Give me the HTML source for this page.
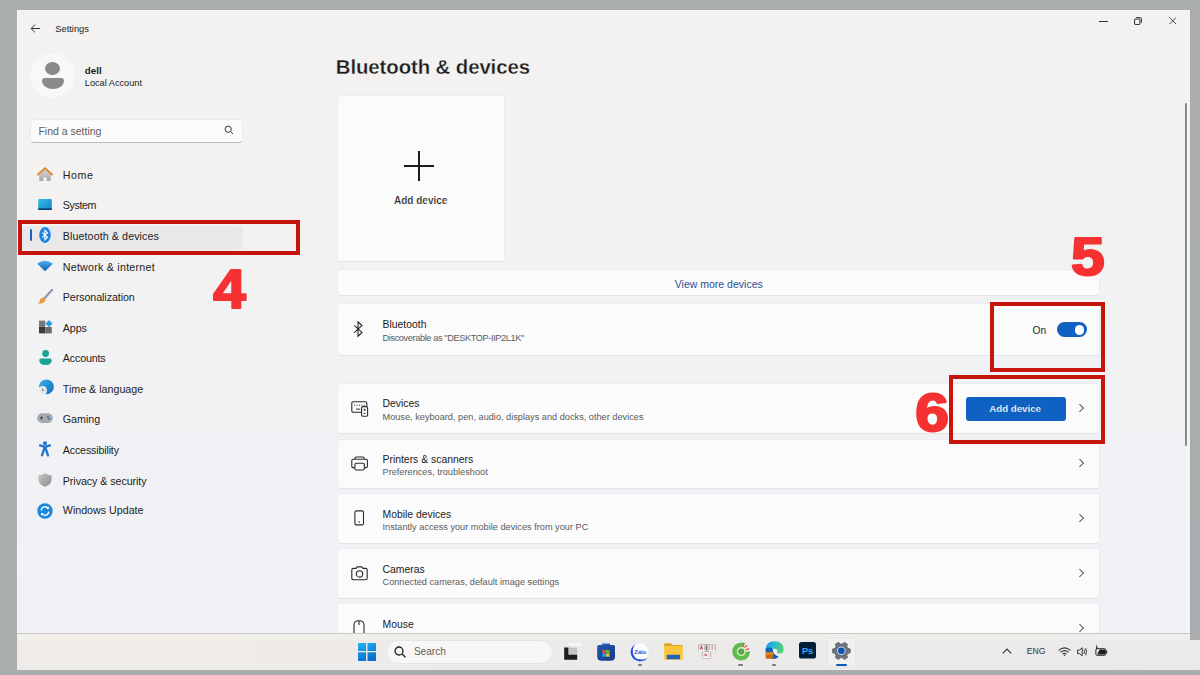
<!DOCTYPE html>
<html><head><meta charset="utf-8">
<style>
*{margin:0;padding:0;box-sizing:border-box}
html,body{width:1200px;height:675px;overflow:hidden;background:#aaadae;font-family:"Liberation Sans",sans-serif;color:#1b1b1b}
.a{position:absolute}
#win{position:absolute;left:17px;top:10px;width:1173px;height:630px;box-shadow:inset 1px 1px 0 rgba(255,255,255,.45);background:linear-gradient(180deg,#f4f2f0 0%,#f3f2f1 33%,#f2f2f4 52%,#f0f1f6 100%);overflow:hidden}
.t{position:absolute;white-space:nowrap;line-height:1}
.nav{font-size:10.7px;color:#1c1c1c}
.card{position:absolute;left:320px;width:763px;background:#fbfbfb;border-radius:4px;border:1px solid #ececee;border-bottom-color:#e3e3e5}
.ttl{font-size:10.4px;color:#1c1c1c}
.dsc{font-size:9.2px;color:#5c5c5c}
.chev{position:absolute;width:5.6px;height:5.6px;border-right:1px solid #5a5a5a;border-top:1px solid #5a5a5a;transform:rotate(45deg)}
.red{position:absolute;border:4.5px solid #c5150c}
.num{position:absolute;font-family:"Liberation Sans",sans-serif;font-weight:bold;color:#ee3130;line-height:1}
#tb{position:absolute;left:17px;top:633px;width:1183px;height:37px;background:linear-gradient(90deg,#efebe8 0%,#edebe9 35%,#ebeaea 100%);border-top:1px solid #c8c8c8}
</style></head><body>
<div id="win">
  <!-- title bar -->
  <svg class="a" style="left:13px;top:14px" width="11" height="10" viewBox="0 0 11 10"><path d="M10 4.5H1.4M5 0.6L1.1 4.5 5 8.4" fill="none" stroke="#333" stroke-width="1"/></svg>
  <div class="t" style="left:38.3px;top:14.8px;font-size:9.3px;color:#222">Settings</div>
  <div class="a" style="left:1082px;top:11px;width:8.5px;height:1px;background:#333"></div>
  <svg class="a" style="left:1117px;top:7.2px" width="8" height="8" viewBox="0 0 8 8"><rect x="0.55" y="2.05" width="5.4" height="5.4" rx="1.1" fill="none" stroke="#333" stroke-width="1.05"/><path d="M2.3 0.55h3.6a1.6 1.6 0 0 1 1.6 1.6v3.6" fill="none" stroke="#333" stroke-width="1"/></svg>
  <svg class="a" style="left:1151.6px;top:7.4px" width="7.6" height="7.6" viewBox="0 0 8 8"><path d="M0.3 0.3L7.7 7.7M7.7 0.3L0.3 7.7" stroke="#333" stroke-width="0.9"/></svg>

  <!-- profile -->
  <div class="a" style="left:13px;top:43px;width:45px;height:45px;border-radius:50%;background:#f8f8f8"></div>
  <div class="a" style="left:28.3px;top:52px;width:14.7px;height:13px;border-radius:50%;background:#8a8a8a"></div>
  <div class="a" style="left:24.7px;top:67.5px;width:22px;height:11px;border-radius:3px 3px 11px 11px/3px 3px 8px 8px;background:#8a8a8a"></div>
  <div class="t" style="left:67.8px;top:56px;font-size:9.8px;font-weight:bold;color:#1b1b1b">dell</div>
  <div class="t" style="left:67.8px;top:69.3px;font-size:9.2px;color:#1b1b1b">Local Account</div>

  <!-- search -->
  <div class="a" style="left:13.4px;top:108.8px;width:212.4px;height:24.2px;background:#fbfbfb;border-radius:4px;border:1px solid #ebebeb;border-bottom:1px solid #bdbdbd"></div>
  <div class="t" style="left:21.4px;top:116px;font-size:10.5px;color:#5d5d5d">Find a setting</div>
  <svg class="a" style="left:207px;top:115px" width="10" height="10" viewBox="0 0 10 10"><circle cx="4.2" cy="4.2" r="3.1" fill="none" stroke="#333" stroke-width="1"/><path d="M6.5 6.5L9 9" stroke="#333" stroke-width="1"/></svg>

  <!-- nav -->
  <div class="a" style="left:5px;top:215.5px;width:221px;height:24px;background:#e9e9ea;border-radius:4px"></div>
  <div class="a" style="left:12.6px;top:219px;width:2.6px;height:12px;background:#1a63c2;border-radius:2px"></div>


  <!-- nav icons (window coords = page - 17,10) -->
  <svg class="a" style="left:20px;top:156px" width="16" height="16" viewBox="0 0 16 16">
    <defs><linearGradient id="hb" x1="0" y1="0" x2="0" y2="1"><stop offset="0" stop-color="#d6d6d6"/><stop offset="1" stop-color="#a9a9a9"/></linearGradient></defs>
    <path d="M2.2 8.2L8 3.2l5.8 5V15H9.6v-3.6H6.4V15H2.2z" fill="url(#hb)"/>
    <path d="M1 8.6L8 2.2l7 6.4" fill="none" stroke="#e0873a" stroke-width="2" stroke-linejoin="round" stroke-linecap="round"/>
  </svg>
  <svg class="a" style="left:21px;top:188.5px" width="14" height="11" viewBox="0 0 14 11">
    <defs><linearGradient id="sy" x1="0" y1="0" x2="1" y2="1"><stop offset="0" stop-color="#2ec0dc"/><stop offset="1" stop-color="#1c80d4"/></linearGradient></defs>
    <rect x="0.2" y="0" width="13.6" height="11" rx="1" fill="url(#sy)"/>
    <rect x="0.2" y="9.4" width="13.6" height="1.6" fill="#0c3a6a"/>
  </svg>
  <svg class="a" style="left:22.3px;top:216.5px" width="12" height="16" viewBox="0 0 12 16">
    <ellipse cx="6" cy="8" rx="5.8" ry="7.9" fill="#1b84e6"/>
    <path d="M3.3 5.6l5.2 4.6L5.9 12.7V3.3l2.6 2.4L3.3 10.4" fill="none" stroke="#fff" stroke-width="1.15" stroke-linejoin="miter"/>
  </svg>
  <svg class="a" style="left:20.2px;top:249.5px" width="16" height="12" viewBox="0 0 16 12">
    <defs><linearGradient id="wf" x1="0" y1="0" x2="0" y2="1"><stop offset="0" stop-color="#4cb3ee"/><stop offset="1" stop-color="#0f5cb0"/></linearGradient></defs>
    <path d="M0.2 3.8Q8 -2.2 15.8 3.8L8 11.2z" fill="url(#wf)"/>
  </svg>
  <svg class="a" style="left:20px;top:278.5px" width="16" height="15" viewBox="0 0 16 15">
    <path d="M15.2 0.6L7.6 9.2" stroke="#8d96a8" stroke-width="2.2" stroke-linecap="round"/>
    <path d="M6.2 8.4q2.2 1 2.4 2.6q-0.8 3.6 -7.8 3.8q1.8 -1.6 2.2 -3.6q0.6 -2.8 3.2 -2.8z" fill="#ee9a3a"/>
  </svg>
  <svg class="a" style="left:21.8px;top:310.2px" width="14" height="14" viewBox="0 0 14 14">
    <rect x="0" y="0.6" width="6.3" height="6.3" fill="#777"/>
    <rect x="0" y="7" width="6.3" height="6.4" fill="#3c3c3c"/>
    <rect x="6.4" y="7" width="6.4" height="6.4" fill="#6b6b6b"/>
    <path d="M10 0l3.6 3.6L10 7.2 6.4 3.6z" fill="#2c9fe3"/>
  </svg>
  <svg class="a" style="left:21.8px;top:340px" width="13" height="16" viewBox="0 0 13 16">
    <circle cx="6.6" cy="3.5" r="3.4" fill="#17a596"/>
    <path d="M0.2 10.2q0-1.8 1.8-1.8h9q1.8 0 1.8 1.8q0 4.8 -6.3 4.8q-6.3 0 -6.3 -4.8z" fill="#17a596"/>
  </svg>
  <svg class="a" style="left:21px;top:369.2px" width="16" height="16" viewBox="0 0 16 16">
    <defs><linearGradient id="tg" x1="0" y1="0" x2="1" y2="1"><stop offset="0" stop-color="#3ab4ea"/><stop offset="1" stop-color="#0f68b8"/></linearGradient></defs>
    <circle cx="8.4" cy="7.8" r="7.4" fill="url(#tg)"/>
    <circle cx="4.6" cy="11.4" r="4" fill="#e6e6e6" stroke="#f6f6f6" stroke-width="0.8"/>
    <path d="M4.6 9.4v2.1h1.5" fill="none" stroke="#666" stroke-width="0.8"/>
  </svg>
  <svg class="a" style="left:20.4px;top:403px" width="16" height="10" viewBox="0 0 16 10">
    <rect x="0.2" y="0.2" width="15.6" height="9.8" rx="4.9" fill="#a4a9af"/>
    <path d="M3 5h3M4.5 3.5v3" stroke="#3b3f45" stroke-width="1"/>
    <circle cx="11" cy="4" r="0.9" fill="#3466b0"/><circle cx="12.3" cy="6" r="0.9" fill="#3466b0"/>
  </svg>
  <svg class="a" style="left:22px;top:430.5px" width="12" height="16" viewBox="0 0 12 16">
    <circle cx="6" cy="2.2" r="2" fill="#1b74cf"/>
    <path d="M1 4.4L6 5.8l5-1.4" fill="none" stroke="#1b74cf" stroke-width="2.2" stroke-linecap="round"/>
    <path d="M6 5.4v4.2" stroke="#1b74cf" stroke-width="3.4"/>
    <path d="M4.9 8.6L3 14.4M7.1 8.6L9 14.4" stroke="#1b74cf" stroke-width="2.3" stroke-linecap="round"/>
  </svg>
  <svg class="a" style="left:21.2px;top:462.8px" width="14" height="14" viewBox="0 0 14 14">
    <defs><linearGradient id="sh" x1="0" y1="0" x2="1" y2="1"><stop offset="0" stop-color="#c8c8c8"/><stop offset="1" stop-color="#8a8a8a"/></linearGradient></defs>
    <path d="M7 0.2Q3.8 2 0.4 2.2V6.4Q0.8 11.6 7 13.8Q13.2 11.6 13.6 6.4V2.2Q10.2 2 7 0.2z" fill="url(#sh)"/>
  </svg>
  <svg class="a" style="left:20.4px;top:492.6px" width="16" height="16" viewBox="0 0 16 16">
    <circle cx="8" cy="8" r="7.7" fill="#1d87d9"/>
    <path d="M4.2 7.4a3.9 3.9 0 0 1 6.9-2.2M11.8 8.6a3.9 3.9 0 0 1 -6.9 2.2" fill="none" stroke="#fff" stroke-width="1.3"/>
    <path d="M11.9 3.2v2.8H9.1z M4.1 12.8V10h2.8z" fill="#fff"/>
  </svg>
  <div class="t nav" style="left:45.8px;top:160.24px;letter-spacing:0.567px">Home</div>
  <div class="t nav" style="left:45.8px;top:190.24px;letter-spacing:-0.400px">System</div>
  <div class="t nav" style="left:45.8px;top:220.84px;letter-spacing:0.089px">Bluetooth &amp; devices</div>
  <div class="t nav" style="left:45.8px;top:251.54px;letter-spacing:0.229px">Network &amp; internet</div>
  <div class="t nav" style="left:45.8px;top:282.24px;letter-spacing:-0.079px">Personalization</div>
  <div class="t nav" style="left:45.8px;top:312.74px;letter-spacing:-0.100px">Apps</div>
  <div class="t nav" style="left:45.8px;top:343.24px;letter-spacing:-0.157px">Accounts</div>
  <div class="t nav" style="left:45.8px;top:373.54px;letter-spacing:0.000px">Time &amp; language</div>
  <div class="t nav" style="left:45.8px;top:404.14px;letter-spacing:0.000px">Gaming</div>
  <div class="t nav" style="left:45.8px;top:434.84px;letter-spacing:-0.167px">Accessibility</div>
  <div class="t nav" style="left:45.8px;top:465.84px;letter-spacing:-0.065px">Privacy &amp; security</div>
  <div class="t nav" style="left:45.8px;top:495.44px;letter-spacing:-0.007px">Windows Update</div>

  <!-- main title -->
  <div class="t" style="left:318.8px;top:47.3px;font-size:20.4px;font-weight:bold;color:#1b1b1b;letter-spacing:-0.1px;-webkit-text-stroke:0.3px #f3f2f0">Bluetooth &amp; devices</div>

  <!-- add device tile -->
  <div class="card" style="left:320px;top:85px;width:167.5px;height:166.5px"></div>
  <div class="a" style="left:387.3px;top:155.3px;width:30px;height:2px;background:#1b1b1b"></div>
  <div class="a" style="left:401.3px;top:141.3px;width:2px;height:30px;background:#1b1b1b"></div>
  <div class="t" style="left:377px;top:186px;font-size:10px;font-weight:bold;color:#262626;-webkit-text-stroke:0.2px #fbfbfb">Add device</div>

  <!-- view more -->
  <div class="card" style="top:258.5px;height:27px"></div>
  <div class="t" style="left:657.8px;top:268.6px;font-size:10.5px;color:#2a4f95">View more devices</div>

  <!-- bluetooth row -->
  <div class="card" style="top:293px;height:52.5px"></div>
  <div class="t ttl" style="left:365.5px;top:310.00px">Bluetooth</div>
  <div class="t dsc" style="left:365.5px;top:323.80px;letter-spacing:-0.38px">Discoverable as "DESKTOP-IIP2L1K"</div>
  <div class="t" style="left:1015.5px;top:315.5px;font-size:10.2px;color:#1f1f1f">On</div>
  <div class="a" style="left:1040.2px;top:312.3px;width:30.2px;height:14.5px;border-radius:8px;background:#0f62c1"></div>
  <div class="a" style="left:1057.8px;top:315.3px;width:9.4px;height:9.4px;border-radius:50%;background:#fff"></div>

  <!-- devices row -->
  <div class="card" style="top:373px;height:50.5px"></div>
  <div class="t ttl" style="left:365.5px;top:389.40px">Devices</div>
  <div class="t dsc" style="left:365.5px;top:402.70px">Mouse, keyboard, pen, audio, displays and docks, other devices</div>
  <div class="a" style="left:949px;top:387px;width:99.6px;height:24px;background:#0f62c1;border-radius:3px"></div>
  <div class="t" style="left:972.3px;top:393.9px;font-size:9.7px;font-weight:bold;color:#fff;-webkit-text-stroke:0.2px #0f62c1">Add device</div>
  <div class="chev" style="left:1060.0px;top:395.0px"></div>

  <!-- printers -->
  <div class="card" style="top:428.6px;height:50.6px"></div>
  <div class="t ttl" style="left:365.5px;top:444.90px">Printers &amp; scanners</div>
  <div class="t dsc" style="left:365.5px;top:458.20px">Preferences, troubleshoot</div>
  <div class="chev" style="left:1060.0px;top:450.0px"></div>

  <!-- mobile -->
  <div class="card" style="top:483.4px;height:50.6px"></div>
  <div class="t ttl" style="left:365.5px;top:500.00px">Mobile devices</div>
  <div class="t dsc" style="left:365.5px;top:512.90px">Instantly access your mobile devices from your PC</div>
  <div class="chev" style="left:1060.0px;top:505.0px"></div>

  <!-- cameras -->
  <div class="card" style="top:538.2px;height:50.7px"></div>
  <div class="t ttl" style="left:365.5px;top:554.80px">Cameras</div>
  <div class="t dsc" style="left:365.5px;top:567.70px">Connected cameras, default image settings</div>
  <div class="chev" style="left:1060.0px;top:560.0px"></div>

  <!-- mouse -->
  <div class="card" style="top:593px;height:50px"></div>
  <div class="t ttl" style="left:365.5px;top:609.60px">Mouse</div>
  <div class="chev" style="left:1060.0px;top:615.0px"></div>


  <!-- row icons -->
  <svg class="a" style="left:336px;top:311px" width="11" height="17" viewBox="0 0 11 17">
    <path d="M1.2 4.4L9 11.4 5 15.2V0.8l4 3.8L1.2 11.6" fill="none" stroke="#1b1b1b" stroke-width="1.05" stroke-linejoin="miter"/>
  </svg>
  <svg class="a" style="left:333.5px;top:391px" width="18" height="16" viewBox="0 0 18 16">
    <path d="M10 11.2H2.2q-1.4 0 -1.4 -1.4V2.2q0 -1.4 1.4 -1.4h12.2q1.4 0 1.4 1.4V5" fill="none" stroke="#2a2a2a" stroke-width="1.1"/>
    <path d="M3.6 3.6v1.2M6 3.6v1.2M8.4 3.6v1.2M10.8 3.6v1.2M13.2 3.6v1.2" stroke="#444" stroke-width="1"/>
    <path d="M5 8.2h4.2" stroke="#555" stroke-width="1.2"/>
    <rect x="10.6" y="5.6" width="6" height="9.6" rx="1.2" fill="#fbfbfb" stroke="#2a2a2a" stroke-width="1.1"/>
    <rect x="12.7" y="7.8" width="1.8" height="1.8" fill="#333"/>
    <path d="M12.8 12.4h1.6" stroke="#333" stroke-width="1.2"/>
  </svg>
  <svg class="a" style="left:333.5px;top:446px" width="17" height="15" viewBox="0 0 17 15">
    <path d="M4 3.2V2.4q0-1.4 1.4-1.4h6.4q1.4 0 1.4 1.4v0.8" fill="none" stroke="#2a2a2a" stroke-width="1.1"/>
    <path d="M3.8 11.6H2.2q-1.4 0 -1.4 -1.4V4.6q0-1.4 1.4-1.4h12.8q1.4 0 1.4 1.4v5.6q0 1.4 -1.4 1.4h-1.6" fill="none" stroke="#2a2a2a" stroke-width="1.1"/>
    <rect x="3.9" y="7.2" width="9.4" height="6.8" rx="1.4" fill="#fbfbfb" stroke="#2a2a2a" stroke-width="1.1"/>
  </svg>
  <svg class="a" style="left:336.5px;top:500px" width="11" height="16" viewBox="0 0 11 16">
    <rect x="0.9" y="0.9" width="8.6" height="14" rx="1.4" fill="none" stroke="#2a2a2a" stroke-width="1.1"/>
    <path d="M4.4 12h1.6" stroke="#2a2a2a" stroke-width="1"/>
  </svg>
  <svg class="a" style="left:333.5px;top:555.5px" width="17" height="15" viewBox="0 0 17 15">
    <path d="M5 2.4L6.2 0.9h4.6L12 2.4h2.6q1.6 0 1.6 1.6v8.2q0 1.6 -1.6 1.6H2.4q-1.6 0 -1.6-1.6V4q0-1.6 1.6-1.6z" fill="none" stroke="#2a2a2a" stroke-width="1.1"/>
    <circle cx="8.5" cy="7.9" r="3.2" fill="none" stroke="#2a2a2a" stroke-width="1.1"/>
  </svg>
  <svg class="a" style="left:335.5px;top:610px" width="12" height="14" viewBox="0 0 12 14">
    <path d="M1 13V5q0-4.2 4.6-4.2h0.8q4.6 0 4.6 4.2v8" fill="none" stroke="#2a2a2a" stroke-width="1.1"/>
    <path d="M6 1v4" stroke="#2a2a2a" stroke-width="1.1"/>
  </svg>
  <!-- scrollbar -->
  <div class="a" style="left:1168px;top:92px;width:3.6px;height:540px;background:linear-gradient(90deg,rgba(255,255,255,0),rgba(255,255,255,.45))"></div>
  <div class="a" style="left:1168.4px;top:92.5px;width:1.6px;height:343px;background:#8c8c8c;border-radius:1px"></div>
</div>

<!-- taskbar -->
<div id="tb"></div>
<div class="a" style="left:1190px;top:633px;width:10px;height:7px;background:#aaadae"></div>
<div class="a" style="left:17px;top:634px;width:1173px;height:6px;background:rgba(255,250,245,.25)"></div>
<div class="a" style="left:385.9px;top:639.6px;width:167px;height:24px;border-radius:12px;background:#f8f7f6;border:1px solid #e6e4e2"></div>
<svg class="a" style="left:394px;top:646px" width="13" height="12" viewBox="0 0 13 12"><circle cx="5" cy="5" r="4" fill="none" stroke="#222" stroke-width="1.3"/><path d="M8 8L11.5 11.3" stroke="#222" stroke-width="1.4"/></svg>
<div class="t" style="left:413.9px;top:646.6px;font-size:10.1px;color:#5d5d5d">Search</div>
<div class="t" style="left:1026.8px;top:647.3px;font-size:8.6px;color:#333">ENG</div>


<!-- taskbar icons (page coords) -->
<svg class="a" style="left:358px;top:642.8px" width="18" height="18" viewBox="0 0 18 18">
  <defs><linearGradient id="wl" x1="0" y1="0" x2="0.4" y2="1"><stop offset="0" stop-color="#22b2f4"/><stop offset="1" stop-color="#0b6fd0"/></linearGradient></defs>
  <path d="M0 0H8.1V8.1H0zM9.5 0H18V8.1H9.5zM0 9.3H8.1V18H0zM9.5 9.3H18V18H9.5z" fill="url(#wl)"/>
</svg>
<svg class="a" style="left:563.5px;top:643px" width="18" height="17" viewBox="0 0 18 17">
  <rect x="4.4" y="0.2" width="13" height="2.4" fill="#f7f7f7"/>
  <path d="M0.2 4.6h4.4v6.8h8.6v5.4H0.2z" fill="#1d1d1d"/>
  <rect x="4.6" y="4.6" width="8.6" height="6.8" fill="#c4c4c4"/>
</svg>
<svg class="a" style="left:597px;top:642.6px" width="19" height="18" viewBox="0 0 19 18">
  <defs><linearGradient id="stg" x1="0" y1="0" x2="1" y2="1"><stop offset="0" stop-color="#2159b0"/><stop offset="1" stop-color="#173c80"/></linearGradient></defs>
  <rect x="4.8" y="0.4" width="8.4" height="1.6" rx="0.6" fill="#2a63b8"/>
  <path d="M0.2 3.6q0-1.6 1.6-1.6h14.6q1.6 0 1.6 1.6v9.8q0 4.4 -4.4 4.4H4.6q-4.4 0 -4.4-4.4z" fill="url(#stg)"/>
  <rect x="5.4" y="7" width="3.4" height="3.2" fill="#d9553a"/><rect x="9.1" y="7" width="3.4" height="3.2" fill="#77b82a"/>
  <rect x="5.4" y="10.5" width="3.4" height="3.2" fill="#2aa6e8"/><rect x="9.1" y="10.5" width="3.4" height="3.2" fill="#efc53a"/>
</svg>
<svg class="a" style="left:630px;top:642.5px" width="19" height="19" viewBox="0 0 19 19">
  <circle cx="9.5" cy="9.3" r="9.1" fill="#fbfbff"/>
  <path d="M5.2 1.4Q0.4 4.2 0.6 9.6Q1.2 17.2 9.8 18.4q5-0.2 7.6-3.4q-3.2 1.8 -6.6 1.6Q3.6 16 2.8 9.4Q2.4 4.6 5.2 1.4z" fill="#1d4fd1"/>
  <text x="10.2" y="11.4" font-family="Liberation Sans" font-size="6" fill="#2f5fd2" stroke="#2f5fd2" stroke-width="0.2" text-anchor="middle">Zalo</text>
</svg>
<div class="a" style="left:637.6px;top:663.6px;width:4.4px;height:2px;border-radius:1px;background:#7a7a7a"></div>
<svg class="a" style="left:664px;top:643.4px" width="19" height="17" viewBox="0 0 19 17">
  <path d="M0.2 1.4q0-1.2 1.2-1.2h5q1 0 1.6 0.8l0.8 1h9.2q1 0 1 1V4H0.2z" fill="#dca62a"/>
  <path d="M0.2 3h18.6v12.8q0 1 -1 1H1.2q-1 0 -1-1z" fill="#f8c53c"/>
  <path d="M3.6 11.8h11.6q0.8 0 0.8 0.8v3.6H2.8v-3.6q0-0.8 0.8-0.8z" fill="#1f64b8"/>
</svg>
<svg class="a" style="left:698px;top:644px" width="18" height="15" viewBox="0 0 18 15">
  <rect x="0.4" y="0.8" width="6.6" height="6.8" fill="#f2dede" stroke="#a8a0a0" stroke-width="0.7"/>
  <rect x="11" y="0.8" width="6.4" height="6.8" fill="#efe4e4" stroke="#a8a0a0" stroke-width="0.7"/>
  <rect x="7.2" y="0.4" width="3.6" height="7.4" fill="#f6f0f0" stroke="#a8a0a0" stroke-width="0.7"/>
  <rect x="4.2" y="7.6" width="8.6" height="6.8" fill="#f3e2e2" stroke="#a8a0a0" stroke-width="0.7"/>
  <path d="M2.4 5.4l1-3 1 3" stroke="#b85050" stroke-width="1.1" fill="none"/>
  <path d="M8.6 1.4v5" stroke="#707070" stroke-width="1.4"/>
  <path d="M14.2 2v4" stroke="#c08a8a" stroke-width="0.9"/>
  <path d="M6.6 10.4l2.4 1.4" stroke="#b85050" stroke-width="1.3"/>
  <rect x="0.4" y="6.2" width="6.6" height="1.4" fill="#fbfbfb"/>
  <rect x="11" y="6.2" width="6.4" height="1.4" fill="#fbfbfb"/>
  <rect x="4.2" y="12.8" width="8.6" height="1.4" fill="#fbfbfb"/>
</svg>
<svg class="a" style="left:731.5px;top:642px" width="19" height="19" viewBox="0 0 19 19">
  <path d="M9.2 0.4A9 9 0 1 0 18.2 9.6L13.6 9.6A4.4 4.4 0 1 1 9.2 5z" fill="#63bb4f"/>
  <path d="M9.2 0.4A9 9 0 0 1 13.2 1.3L11.2 5.4A4.4 4.4 0 0 0 9.2 5z" fill="#63bb4f"/>
  <circle cx="9.2" cy="9.6" r="3.8" fill="none" stroke="#c8f0b0" stroke-width="1.1"/>
  <circle cx="9.2" cy="9.6" r="3.1" fill="#5aa84a"/>
  <path d="M11.4 1.6l-0.6 2.4M14.8 3.6l-2 1.6M16.8 6.8l-2.6 0.8" stroke="#e25050" stroke-width="1.3" stroke-linecap="round"/>
</svg>
<div class="a" style="left:738.4px;top:664px;width:4.4px;height:2px;border-radius:1px;background:#7a7a7a"></div>
<svg class="a" style="left:765px;top:641.2px" width="19" height="19" viewBox="0 0 19 19">
  <defs><linearGradient id="eg" x1="0" y1="0" x2="1" y2="0.3"><stop offset="0" stop-color="#1b8fe0"/><stop offset="0.55" stop-color="#2bbcd0"/><stop offset="1" stop-color="#53d07a"/></linearGradient></defs>
  <path d="M0.4 9.2Q0.8 0.4 9.6 0.3Q18.4 0.6 18.6 8.4q0 4-3.6 4.2q-3.2 0 -3.6-2.4q-0.2 -2.4 -2.6-2.6q-2.6 0 -3.2 2.4z" fill="url(#eg)"/>
  <path d="M0.4 9.2q0.6-2.4 4-2.6q3.2 0 3.8 3.2q0.6 4.8 5.6 5.8q-2 3.2 -6.8 2.2q-5.8-1.4-6.6-8.6z" fill="#1560b8"/>
  <path d="M0.6 11.4h7.8v6.4H0.8z" fill="#c86a10"/>
  <path d="M0.6 11.4h7.8v2.2H0.6z" fill="#e39020"/>
  <circle cx="10.2" cy="10" r="2.1" fill="#f4f4f4"/>
</svg>
<div class="a" style="left:772px;top:664px;width:4.4px;height:2px;border-radius:1px;background:#7a7a7a"></div>
<svg class="a" style="left:799px;top:642.4px" width="17" height="16.6" viewBox="0 0 17 16.6">
  <rect x="0" y="0" width="17" height="16.6" rx="2.6" fill="#001e36"/>
  <text x="8.4" y="11.8" font-family="Liberation Sans" font-size="9.4" font-weight="bold" fill="#31a8ff" text-anchor="middle" letter-spacing="-0.3">Ps</text>
</svg>
<div class="a" style="left:827px;top:636.8px;width:29px;height:29.8px;border-radius:4px;background:#f3f1f0;border:1px solid #e8e6e4"></div>
<svg class="a" style="left:832px;top:642.4px" width="19" height="18" viewBox="0 0 19 18">
  <path d="M15.84 11.37 L18.20 10.77 L18.20 7.03 L15.84 6.43 L14.76 4.56 L15.42 2.21 L12.18 0.34 L10.48 2.08 L8.32 2.08 L6.62 0.34 L3.38 2.21 L4.04 4.56 L2.96 6.43 L0.60 7.03 L0.60 10.77 L2.96 11.37 L4.04 13.24 L3.38 15.59 L6.62 17.46 L8.32 15.72 L10.48 15.72 L12.18 17.46 L15.42 15.59 L14.76 13.24z" fill="#6e7178" stroke="#6e7178" stroke-width="1" stroke-linejoin="round"/>
  <circle cx="9.3" cy="8.8" r="4.3" fill="#bcd8f6"/>
  <circle cx="9.3" cy="8.8" r="3.3" fill="#0d52b0"/>
</svg>
<div class="a" style="left:835.6px;top:664px;width:11.8px;height:2px;border-radius:1px;background:#0a5cb8"></div>

<!-- tray -->
<svg class="a" style="left:1001.5px;top:648px" width="10" height="6" viewBox="0 0 10 6"><path d="M0.8 5.4L5 1.2l4.2 4.2" fill="none" stroke="#333" stroke-width="1.2"/></svg>
<svg class="a" style="left:1058px;top:646.5px" width="13" height="9" viewBox="0 0 13 9">
  <path d="M0.6 3.4q5.9-5 11.8 0M2.6 5.2q3.9-3.2 7.8 0M4.6 7q1.9-1.4 3.8 0" fill="none" stroke="#333" stroke-width="1.1"/>
  <circle cx="6.5" cy="8.2" r="0.8" fill="#333"/>
</svg>
<svg class="a" style="left:1076.5px;top:646.5px" width="11" height="9.5" viewBox="0 0 11 9.5">
  <path d="M0.6 3h2L5.2 0.8v8L2.6 6.6h-2z" fill="none" stroke="#333" stroke-width="1"/>
  <path d="M7 2.6q1 2.1 0 4.2M8.6 1.2q1.8 3.5 0 7" fill="none" stroke="#333" stroke-width="1"/>
</svg>
<svg class="a" style="left:1095px;top:644.8px" width="13" height="11" viewBox="0 0 13 11">
  <rect x="0.9" y="3.7" width="9.8" height="6.6" rx="1" fill="none" stroke="#2a2a2a" stroke-width="1"/>
  <path d="M2.2 9.6L4.6 4.4H10.2V9.6z" fill="#1e1e1e"/>
  <rect x="10.8" y="5.6" width="1.4" height="2.8" fill="#2a2a2a"/>
  <path d="M1.6 0.4v3.6l1.6 -1.4" fill="none" stroke="#2a2a2a" stroke-width="1"/>
</svg>

<!-- annotations -->
<div class="red" style="left:18px;top:220px;width:282px;height:35.4px"></div>
<div class="red" style="left:990px;top:302px;width:114.5px;height:70px"></div>
<div class="red" style="left:949px;top:375px;width:155.5px;height:69px"></div>
<svg class="a" style="left:0;top:0" width="1200" height="675" viewBox="0 0 1200 675">
  <g font-family="Liberation Sans" font-weight="bold" fill="#f63131" stroke="#f63131" stroke-width="2.2" stroke-linejoin="round">
    <text transform="translate(213.2 308.4) scale(1.064 1)" font-size="55">4</text>
    <text transform="translate(1070.9 275.3) scale(1.124 1)" font-size="53.8">5</text>
    <text transform="translate(915.3 430.6) scale(1.137 1)" font-size="53.3">6</text>
  </g>
</svg>
</body></html>
